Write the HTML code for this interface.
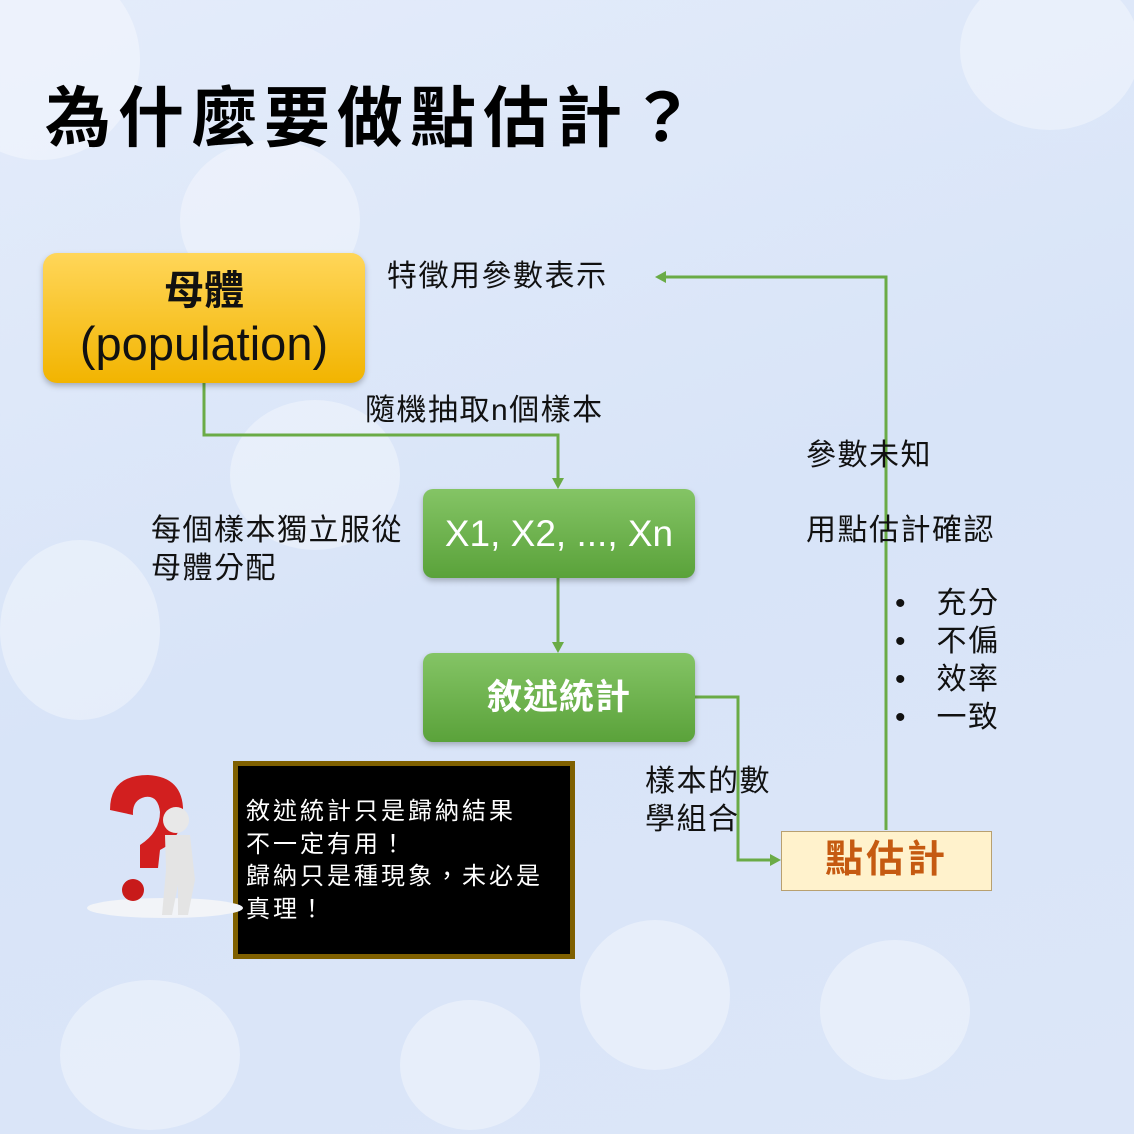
<!DOCTYPE html>
<html><head><meta charset="utf-8"><style>
body{margin:0;width:1134px;height:1134px;overflow:hidden;position:relative;font-family:"Liberation Sans","Noto Sans CJK TC",sans-serif;background:linear-gradient(160deg,#e4ecfa 0%,#d8e4f8 50%,#dce6f8 100%);}
.t{position:absolute;white-space:nowrap;color:#111;font-size:30px;line-height:38px;letter-spacing:1.5px;}
.f{position:absolute;border-radius:50%;background:rgba(255,255,255,.35);}
</style></head><body>
<div class="f" style="left:-60px;top:-40px;width:200px;height:200px"></div>
<div class="f" style="left:180px;top:140px;width:180px;height:160px"></div>
<div class="f" style="left:0;top:540px;width:160px;height:180px"></div>
<div class="f" style="left:230px;top:400px;width:170px;height:150px"></div>
<div class="f" style="left:580px;top:920px;width:150px;height:150px"></div>
<div class="f" style="left:820px;top:940px;width:150px;height:140px"></div>
<div class="f" style="left:400px;top:1000px;width:140px;height:130px"></div>
<div class="f" style="left:60px;top:980px;width:180px;height:150px"></div>
<div class="f" style="left:960px;top:-30px;width:180px;height:160px"></div>
<div class="t" style="left:45px;top:78px;font-size:66px;line-height:80px;font-weight:bold;color:#000;letter-spacing:7px">為什麼要做點估計？</div>
<svg style="position:absolute;left:0;top:0" width="1134" height="1134">
<defs>
<linearGradient id="y" x1="0" y1="0" x2="0" y2="1"><stop offset="0" stop-color="#ffd659"/><stop offset="1" stop-color="#f2b400"/></linearGradient>
<linearGradient id="g" x1="0" y1="0" x2="0" y2="1"><stop offset="0" stop-color="#84c465"/><stop offset="1" stop-color="#5aa23a"/></linearGradient>
</defs>
<g fill="none" stroke="#6aab46" stroke-width="3">
<polyline points="204,383 204,435 558,435 558,480"/>
<polyline points="558,578 558,645"/>
<polyline points="695,697 738,697 738,860 772,860"/>
<polyline points="886,830 886,277 664,277"/>
</g>
<g fill="#6aab46">
<polygon points="552,478 564,478 558,489"/>
<polygon points="552,642 564,642 558,653"/>
<polygon points="770,854 770,866 781,860"/>
<polygon points="666,271 666,283 655,277"/>
</g>
<rect x="43" y="253" width="322" height="130" rx="14" fill="url(#y)" style="filter:drop-shadow(0 3px 3px rgba(0,0,0,.25))"/>
<rect x="423" y="489" width="272" height="89" rx="10" fill="url(#g)" style="filter:drop-shadow(0 3px 3px rgba(0,0,0,.25))"/>
<rect x="423" y="653" width="272" height="89" rx="10" fill="url(#g)" style="filter:drop-shadow(0 3px 3px rgba(0,0,0,.25))"/>
<rect x="781.5" y="831.5" width="210" height="59" fill="#fff2cc" stroke="#b8a070"/>
<rect x="235.5" y="763.5" width="337" height="193" fill="#000" stroke="#7f6000" stroke-width="5"/>
<ellipse cx="165" cy="908" rx="78" ry="10" fill="#f2f4f8"/>
<path d="M110 810 Q110 775 148 775 Q185 777 183 815 Q180 840 160 850 L158 868 L140 868 L140 845 Q160 832 160 812 Q158 795 145 797 Q132 800 133 815 Z" fill="#d21f1f"/>
<circle cx="133" cy="890" r="11" fill="#c81a1a"/>
<circle cx="176" cy="820" r="13" fill="#e8e8e8"/>
<path d="M165 835 L190 835 L195 880 L188 915 L178 915 L178 885 L172 915 L162 915 L166 870 Z" fill="#e4e4e4"/>
</svg>
<div class="t" style="left:43px;top:268px;width:322px;text-align:center;font-size:40px;line-height:46px;font-weight:bold;letter-spacing:0">母體</div>
<div class="t" style="left:43px;top:318px;width:322px;text-align:center;font-size:47px;line-height:52px;letter-spacing:0">(population)</div>
<div class="t" style="left:423px;top:510px;width:272px;text-align:center;font-size:37px;line-height:48px;color:#fff;letter-spacing:0">X1, X2, ..., Xn</div>
<div class="t" style="left:423px;top:674px;width:272px;text-align:center;font-size:35px;line-height:48px;color:#fff;font-weight:bold;letter-spacing:1px">敘述統計</div>
<div class="t" style="left:781px;top:835px;width:211px;text-align:center;font-size:38px;line-height:50px;color:#c55a11;font-weight:bold;letter-spacing:3px">點估計</div>
<div class="t" style="left:246px;top:796px;font-size:24px;line-height:32.5px;color:#fff;letter-spacing:3px">敘述統計只是歸納結果<br>不一定有用！<br>歸納只是種現象，未必是<br>真理！</div>
<div class="t" style="left:387px;top:258px">特徵用參數表示</div>
<div class="t" style="left:365px;top:392px">隨機抽取n個樣本</div>
<div class="t" style="left:806px;top:437px">參數未知</div>
<div class="t" style="left:806px;top:512px">用點估計確認</div>
<div class="t" style="left:895px;top:585px">•&nbsp;&nbsp;&nbsp;充分<br>•&nbsp;&nbsp;&nbsp;不偏<br>•&nbsp;&nbsp;&nbsp;效率<br>•&nbsp;&nbsp;&nbsp;一致</div>
<div class="t" style="left:151px;top:512px">每個樣本獨立服從<br>母體分配</div>
<div class="t" style="left:645px;top:763px">樣本的數<br>學組合</div>
</body></html>
